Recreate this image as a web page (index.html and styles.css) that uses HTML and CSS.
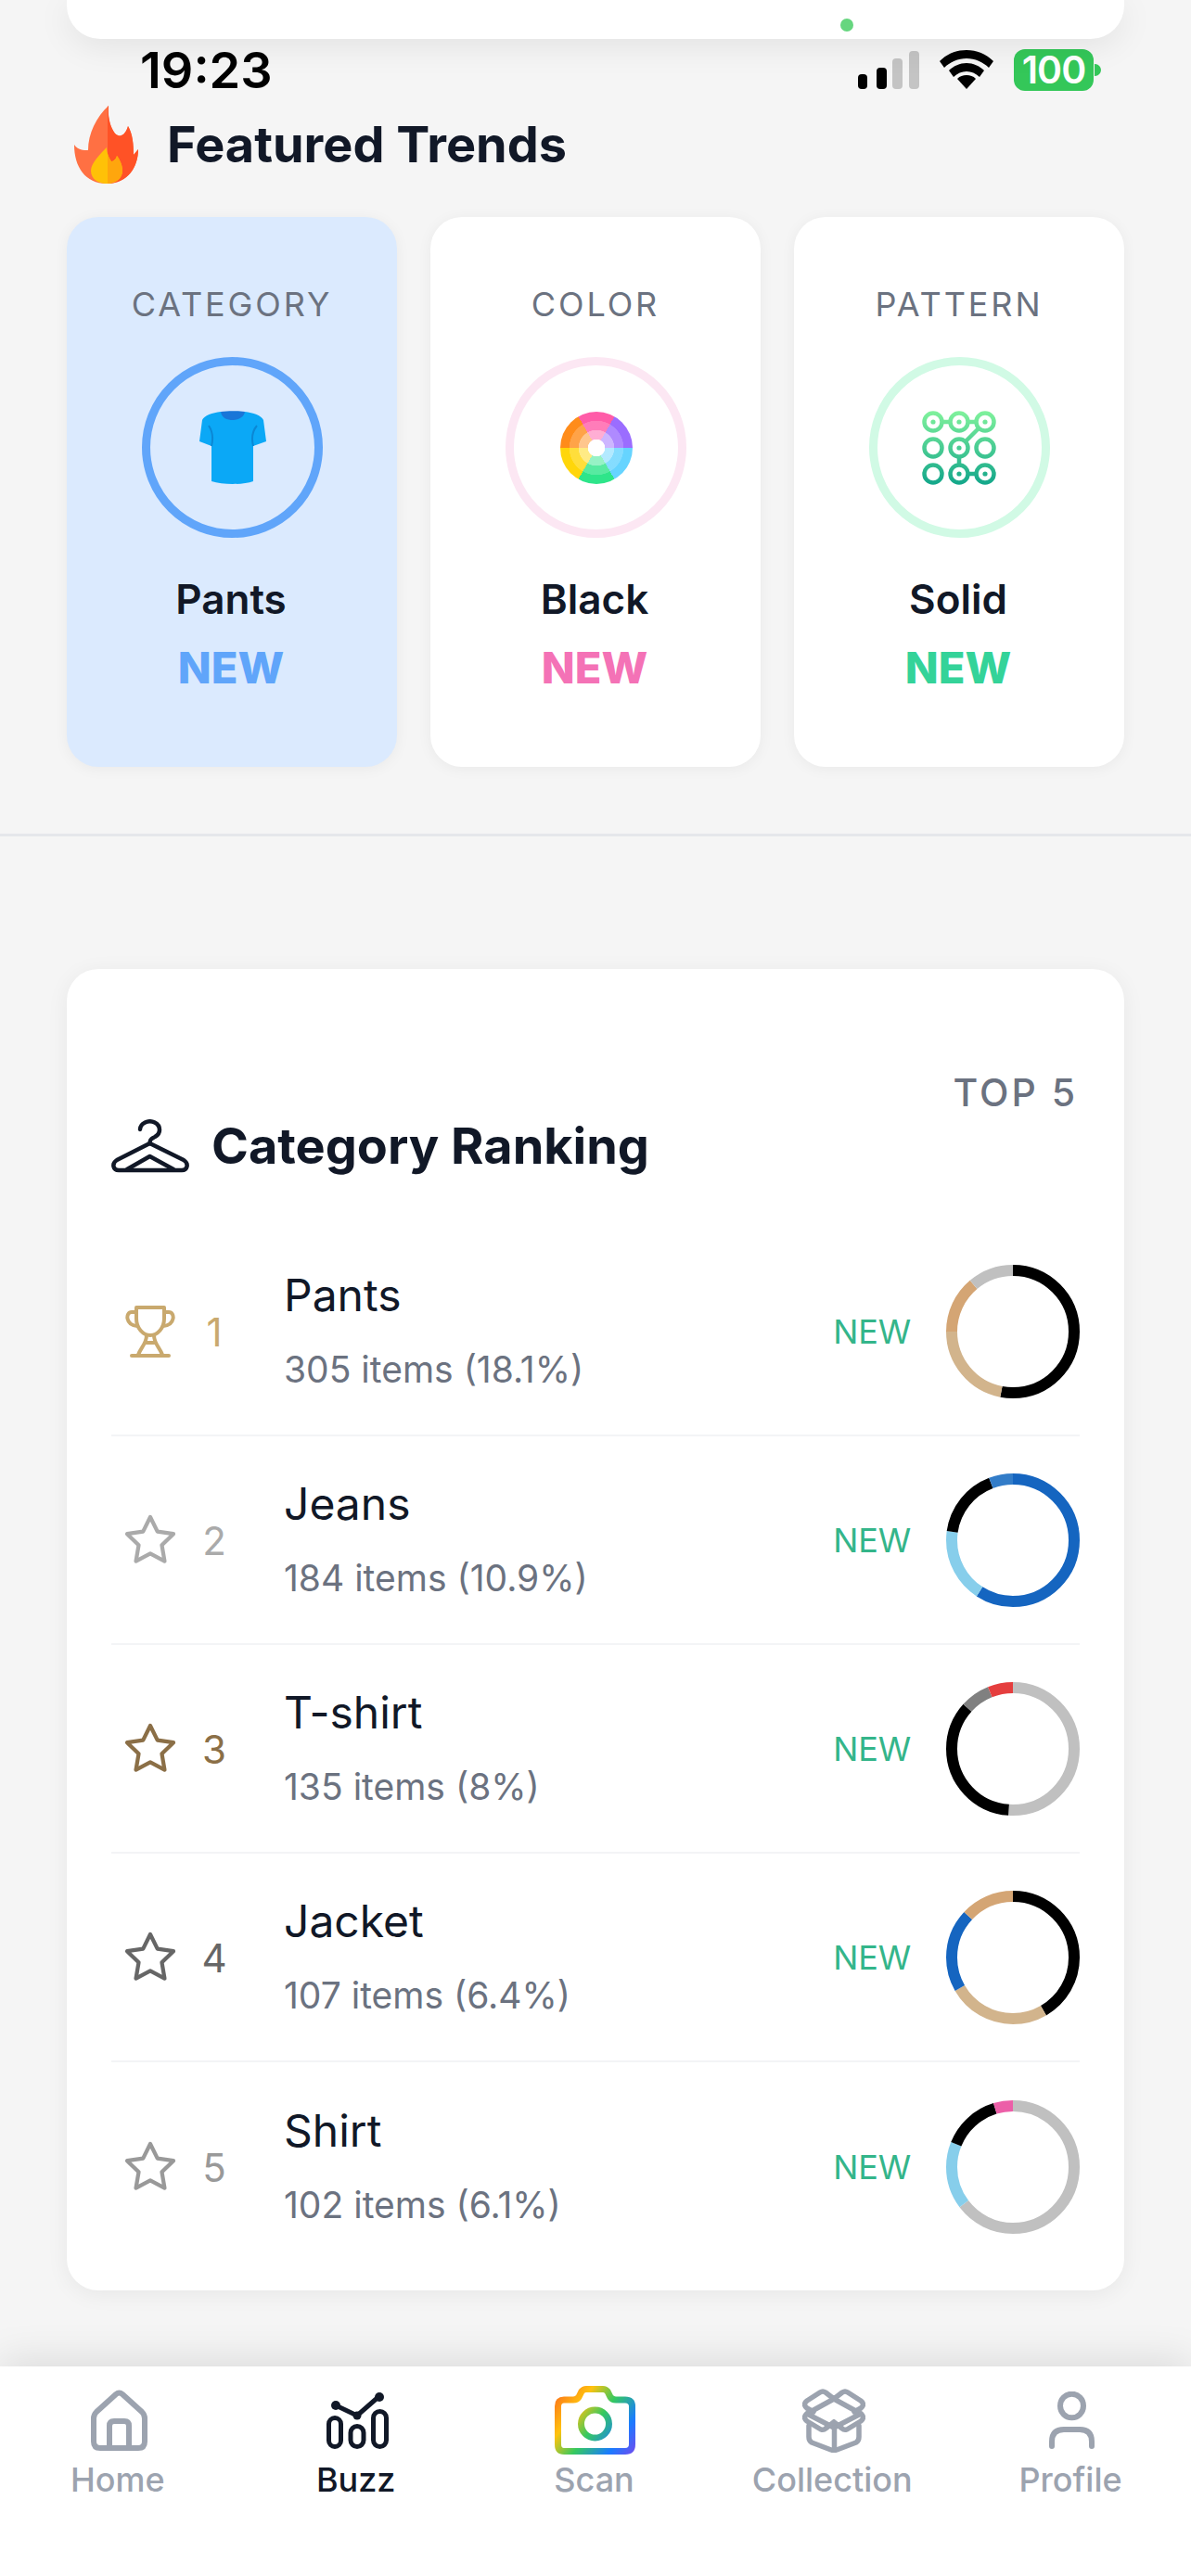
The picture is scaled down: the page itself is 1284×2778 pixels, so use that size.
FILE: index.html
```html
<!doctype html>
<html>
<head>
<meta charset="utf-8">
<title>Buzz</title>
<link rel="stylesheet" href="styles.css">
</head>
<body>
<div class="topCard"><span class="topDot"></span></div>

<div class="statusBar">
	<span class="time">19:23</span>
	<div class="statusIcons">
		<svg class="signal" width="66" height="41" viewBox="0 0 66 41">
			<rect x="0" y="25" width="10" height="16" rx="4" fill="#000"/>
			<rect x="20" y="18" width="11" height="23" rx="4" fill="#000"/>
			<rect x="37" y="8" width="11" height="33" rx="4" fill="#c4c4c4"/>
			<rect x="55" y="0" width="11" height="41" rx="4" fill="#c4c4c4"/>
		</svg>
		<svg class="wifi" width="58" height="42" viewBox="0 0 58 42">
			<path d="M29 0C18 0 8 4 0 12l5 7c6-6 15-10 24-10s18 4 24 10l5-7C50 4 40 0 29 0z" fill="#000"/>
			<path d="M29 14c-7 0-14 3-19 8l5 7c4-4 9-6 14-6s10 2 14 6l5-7c-5-5-12-8-19-8z" fill="#000"/>
			<path d="M29 27c-4 0-7 1-10 4l10 11 10-11c-3-3-6-4-10-4z" fill="#000"/>
		</svg>
		<div class="battery">100</div>
		<span class="batteryNub"></span>
	</div>
</div>

<div class="sectionHead">
	<svg width="70" height="84" viewBox="0 0 70 84">
		<defs>
			<clipPath id="flameRight"><rect x="36" y="0" width="34" height="84"/></clipPath>
		</defs>
		<path d="M37 0C24 12 15 30 15 48C10 48 4 48 0 42C0 66 12 84 35 84C58 84 69 66 69 47L64 53C64 42 63 30 58 22C56 30 50 36 44 30C38 22 36 10 37 0Z" fill="#ff7043"/>
		<path clip-path="url(#flameRight)" d="M37 0C24 12 15 30 15 48C10 48 4 48 0 42C0 66 12 84 35 84C58 84 69 66 69 47L64 53C64 42 63 30 58 22C56 30 50 36 44 30C38 22 36 10 37 0Z" fill="#ff5226"/>
		<path d="M35 45C28 52 18 62 18 70C18 79 26 84 35 84C44 84 52 79 52 70C52 64 49 58 46 54C45 58 42 60 40 60C37 56 35 50 35 45Z" fill="#ffc107"/>
		<path clip-path="url(#flameRight)" d="M35 45C28 52 18 62 18 70C18 79 26 84 35 84C44 84 52 79 52 70C52 64 49 58 46 54C45 58 42 60 40 60C37 56 35 50 35 45Z" fill="#ffa60d"/>
	</svg>
	<h2>Featured Trends</h2>
</div>

<div class="trendList">
	<div class="trendCard trendCardOn">
		<div class="trendLabel">CATEGORY</div>
		<div class="trendCircle circleBlue">
			<svg class="teeIcon" width="72" height="79" viewBox="0 0 72 79">
				<path d="M23 1C14 2 5 5 3 10L0 33L13 38V76C25 80 47 80 58 76V38L72 33L69 10C67 5 58 2 49 1C45 6 27 6 23 1Z" fill="#0ba8f6"/>
				<path d="M23 1C30 0 42 0 49 1C48 8 40 10 36 10C30 10 24 8 23 1Z" fill="#1976d8"/>
				<path d="M13 38C15 30 14 22 10 16M58 38C56 30 57 22 62 16" fill="none" stroke="#0b87d4" stroke-width="2"/>
			</svg>
		</div>
		<div class="trendName">Pants</div>
		<div class="trendNew newBlue">NEW</div>
	</div>
	<div class="trendCard">
		<div class="trendLabel">COLOR</div>
		<div class="trendCircle circlePink">
			<div class="colorWheel"></div>
		</div>
		<div class="trendName">Black</div>
		<div class="trendNew newPink">NEW</div>
	</div>
	<div class="trendCard">
		<div class="trendLabel">PATTERN</div>
		<div class="trendCircle circleGreen">
			<svg width="80" height="80" viewBox="0 0 80 80">
				<defs>
					<linearGradient id="patternGrad" gradientUnits="userSpaceOnUse" x1="0" y1="0" x2="0" y2="80">
						<stop offset="0" stop-color="#80f29c"/>
						<stop offset="1" stop-color="#12a68a"/>
					</linearGradient>
				</defs>
				<g fill="none" stroke="url(#patternGrad)" stroke-width="4.5">
					<circle cx="12" cy="12" r="9.5"/><circle cx="40" cy="12" r="9.5"/><circle cx="68" cy="12" r="9.5"/>
					<circle cx="12" cy="40" r="9.5"/><circle cx="40" cy="40" r="9.5"/><circle cx="68" cy="40" r="9.5"/>
					<circle cx="12" cy="68" r="9.5"/><circle cx="40" cy="68" r="9.5"/><circle cx="68" cy="68" r="9.5"/>
					<path d="M21 12H31M49 12H59M61 19L47 33M40 49V59M49 68H59"/>
				</g>
				<g fill="url(#patternGrad)">
					<circle cx="12" cy="12" r="2.6"/><circle cx="40" cy="12" r="2.6"/><circle cx="68" cy="12" r="2.6"/>
					<circle cx="40" cy="40" r="2.6"/><circle cx="40" cy="68" r="2.6"/><circle cx="68" cy="68" r="2.6"/>
				</g>
			</svg>
		</div>
		<div class="trendName">Solid</div>
		<div class="trendNew newGreen">NEW</div>
	</div>
</div>

<div class="divider"></div>

<div class="rankCard">
	<div class="rankTop">TOP 5</div>
	<div class="rankHead">
		<svg width="84" height="58" viewBox="0 0 84 58" fill="none" stroke="#111827" stroke-width="4.5" stroke-linejoin="round" stroke-linecap="round">
			<path d="M31 11A10.5 9 0 1 1 47 19C44 21 41.5 21 41.5 26"/>
			<path d="M41.5 26L78 44C84 48 82 55 76 55H8C2 55 0 48 6 44Z"/>
			<path d="M17 54L41.5 40L67 54"/>
		</svg>
		<h2>Category Ranking</h2>
	</div>

	<div class="rankRow">
		<div class="rankIcon">
			<svg width="54" height="56" viewBox="0 0 54 56" fill="none" stroke="#c9a96e" stroke-width="4" stroke-linecap="round" stroke-linejoin="round">
				<path d="M12 2H42V14C42 24 35 32 27 32C19 32 12 24 12 14Z"/>
				<path d="M12 7H7C0 7 0 21 13 22M42 7H47C54 7 54 21 41 22"/>
				<path d="M23 32C23 41 17 45 14 53M31 32C31 41 37 45 40 53M21 40H33"/>
				<path d="M7 54H47"/>
			</svg>
		</div>
		<div class="rankNum num1">1</div>
		<div class="rankInfo">
			<div class="rankName">Pants</div>
			<div class="rankSub">305 items (18.1%)</div>
		</div>
		<div class="rankNew">NEW</div>
		<svg class="donut" width="144" height="144" viewBox="0 0 144 144">
			<circle cx="72" cy="72" r="66" pathLength="360" stroke="#000" stroke-dasharray="191 169"/>
			<circle cx="72" cy="72" r="66" pathLength="360" stroke="#d2b48c" stroke-dasharray="79 281" stroke-dashoffset="-191"/>
			<circle cx="72" cy="72" r="66" pathLength="360" stroke="#d4a574" stroke-dasharray="50 310" stroke-dashoffset="-270"/>
			<circle cx="72" cy="72" r="66" pathLength="360" stroke="#c0c0c0" stroke-dasharray="40 320" stroke-dashoffset="-320"/>
		</svg>
	</div>

	<div class="rankRow">
		<div class="rankIcon">
			<svg class="star star2" width="60" height="60" viewBox="0 0 24 24"><path d="M12 2l3.09 6.26L22 9.27l-5 4.87 1.18 6.88L12 17.77l-6.18 3.25L7 14.14 2 9.27l6.91-1.01L12 2z"/></svg>
		</div>
		<div class="rankNum num2">2</div>
		<div class="rankInfo">
			<div class="rankName">Jeans</div>
			<div class="rankSub">184 items (10.9%)</div>
		</div>
		<div class="rankNew">NEW</div>
		<svg class="donut" width="144" height="144" viewBox="0 0 144 144">
			<circle cx="72" cy="72" r="66" pathLength="360" stroke="#1565c0" stroke-dasharray="213 147"/>
			<circle cx="72" cy="72" r="66" pathLength="360" stroke="#87ceeb" stroke-dasharray="65 295" stroke-dashoffset="-213"/>
			<circle cx="72" cy="72" r="66" pathLength="360" stroke="#000" stroke-dasharray="61 299" stroke-dashoffset="-278"/>
			<circle cx="72" cy="72" r="66" pathLength="360" stroke="#327cc8" stroke-dasharray="21 339" stroke-dashoffset="-339"/>
		</svg>
	</div>

	<div class="rankRow">
		<div class="rankIcon">
			<svg class="star star3" width="60" height="60" viewBox="0 0 24 24"><path d="M12 2l3.09 6.26L22 9.27l-5 4.87 1.18 6.88L12 17.77l-6.18 3.25L7 14.14 2 9.27l6.91-1.01L12 2z"/></svg>
		</div>
		<div class="rankNum num3">3</div>
		<div class="rankInfo">
			<div class="rankName">T-shirt</div>
			<div class="rankSub">135 items (8%)</div>
		</div>
		<div class="rankNew">NEW</div>
		<svg class="donut" width="144" height="144" viewBox="0 0 144 144">
			<circle cx="72" cy="72" r="66" pathLength="360" stroke="#c0c0c0" stroke-dasharray="184 176"/>
			<circle cx="72" cy="72" r="66" pathLength="360" stroke="#000" stroke-dasharray="128 232" stroke-dashoffset="-184"/>
			<circle cx="72" cy="72" r="66" pathLength="360" stroke="#808080" stroke-dasharray="26 334" stroke-dashoffset="-312"/>
			<circle cx="72" cy="72" r="66" pathLength="360" stroke="#e53e3e" stroke-dasharray="22 338" stroke-dashoffset="-338"/>
		</svg>
	</div>

	<div class="rankRow">
		<div class="rankIcon">
			<svg class="star star4" width="60" height="60" viewBox="0 0 24 24"><path d="M12 2l3.09 6.26L22 9.27l-5 4.87 1.18 6.88L12 17.77l-6.18 3.25L7 14.14 2 9.27l6.91-1.01L12 2z"/></svg>
		</div>
		<div class="rankNum num4">4</div>
		<div class="rankInfo">
			<div class="rankName">Jacket</div>
			<div class="rankSub">107 items (6.4%)</div>
		</div>
		<div class="rankNew">NEW</div>
		<svg class="donut" width="144" height="144" viewBox="0 0 144 144">
			<circle cx="72" cy="72" r="66" pathLength="360" stroke="#000" stroke-dasharray="150 210"/>
			<circle cx="72" cy="72" r="66" pathLength="360" stroke="#d2b48c" stroke-dasharray="90 270" stroke-dashoffset="-150"/>
			<circle cx="72" cy="72" r="66" pathLength="360" stroke="#1565c0" stroke-dasharray="73 287" stroke-dashoffset="-240"/>
			<circle cx="72" cy="72" r="66" pathLength="360" stroke="#d4a574" stroke-dasharray="47 313" stroke-dashoffset="-313"/>
		</svg>
	</div>

	<div class="rankRow rankRowLast">
		<div class="rankIcon">
			<svg class="star star5" width="60" height="60" viewBox="0 0 24 24"><path d="M12 2l3.09 6.26L22 9.27l-5 4.87 1.18 6.88L12 17.77l-6.18 3.25L7 14.14 2 9.27l6.91-1.01L12 2z"/></svg>
		</div>
		<div class="rankNum num5">5</div>
		<div class="rankInfo">
			<div class="rankName">Shirt</div>
			<div class="rankSub">102 items (6.1%)</div>
		</div>
		<div class="rankNew">NEW</div>
		<svg class="donut" width="144" height="144" viewBox="0 0 144 144">
			<circle cx="72" cy="72" r="66" pathLength="360" stroke="#c0c0c0" stroke-dasharray="233 127"/>
			<circle cx="72" cy="72" r="66" pathLength="360" stroke="#87ceeb" stroke-dasharray="59 301" stroke-dashoffset="-233"/>
			<circle cx="72" cy="72" r="66" pathLength="360" stroke="#000" stroke-dasharray="51 309" stroke-dashoffset="-292"/>
			<circle cx="72" cy="72" r="66" pathLength="360" stroke="#ec5fa8" stroke-dasharray="17 343" stroke-dashoffset="-343"/>
		</svg>
	</div>
</div>

<div class="tabBar">
	<div class="tabItem">
		<div class="tabIcon">
			<svg width="61" height="66" viewBox="0 0 61 66" fill="none" stroke="#9ca3af" stroke-width="6" stroke-linejoin="round" stroke-linecap="round">
				<path d="M27 5Q30.500 2 34 5L55 24Q58 27 58 31V56Q58 63 51 63H10Q3 63 3 56V31Q3 27 6 24Z"/>
				<path d="M20 63V39Q20 34 25 34H36Q41 34 41 39V63"/>
			</svg>
		</div>
		<span>Home</span>
	</div>
	<div class="tabItem tabItemOn">
		<div class="tabIcon">
			<svg width="67" height="61" viewBox="0 0 67 61">
				<g fill="none" stroke="#111827" stroke-width="5">
					<rect x="2.500" y="27.500" width="13" height="31" rx="6.500"/>
					<rect x="26" y="36.500" width="14" height="22" rx="7"/>
					<rect x="50.500" y="20.500" width="14" height="38" rx="7"/>
					<path d="M10 14L33 25L57 4"/>
				</g>
				<g fill="#111827">
					<circle cx="10" cy="14" r="5"/><circle cx="33" cy="25" r="4.500"/><circle cx="57" cy="5" r="5"/>
				</g>
			</svg>
		</div>
		<span>Buzz</span>
	</div>
	<div class="tabItem">
		<div class="tabIcon">
			<svg width="87" height="74" viewBox="0 0 87 74" fill="none" stroke="url(#scanGrad)" stroke-width="7">
				<defs>
					<linearGradient id="scanGrad" gradientUnits="userSpaceOnUse" x1="0" y1="5" x2="87" y2="70">
						<stop offset="0" stop-color="#fb6a1c"/>
						<stop offset=".28" stop-color="#ffc20e"/>
						<stop offset=".52" stop-color="#35c95f"/>
						<stop offset=".8" stop-color="#1a7bff"/>
						<stop offset="1" stop-color="#6a4ff0"/>
					</linearGradient>
				</defs>
				<path d="M10 15H20Q24 15 26 12L29 6Q31 3.500 34 3.500H52Q55 3.500 57 6L60 12Q62 15 66 15H76Q83.500 15 83.500 22V63Q83.500 70.500 76 70.500H10Q3.500 70.500 3.500 63V22Q3.500 15 10 15Z"/>
				<circle cx="43.500" cy="41" r="15"/>
			</svg>
		</div>
		<span>Scan</span>
	</div>
	<div class="tabItem">
		<div class="tabIcon">
			<svg width="68" height="69" viewBox="0 0 68 69" fill="none" stroke="#9ca3af" stroke-width="5.500" stroke-linejoin="round" stroke-linecap="round">
				<path d="M34 11L63 27L34 42L5 27Z"/>
				<path d="M34 11L25 4Q22 2 19 4L5 13Q0 17 5 21L12 25M34 11L43 4Q46 2 49 4L63 13Q68 17 63 21L56 25"/>
				<path d="M5 27Q0 31 5 35L20 44Q23 45 25 43L34 36M63 27Q68 31 63 35L48 44Q45 45 43 43L34 36"/>
				<path d="M7 40V52Q7 56 10 58L31 66Q34 67 37 66L58 58Q61 56 61 52V40M34.500 42V66"/>
			</svg>
		</div>
		<span>Collection</span>
	</div>
	<div class="tabItem">
		<div class="tabIcon">
			<svg width="49" height="62" viewBox="0 0 49 62" fill="none" stroke="#9ca3af" stroke-width="6" stroke-linecap="round">
				<ellipse cx="24.500" cy="15.500" rx="12.500" ry="12.800"/>
				<path d="M3 59V54Q3 41 16 41H33Q46 41 46 54V59"/>
			</svg>
		</div>
		<span>Profile</span>
	</div>
</div>
</body>
</html>
```

FILE: styles.css
```css
*{ margin:0; padding:0; box-sizing:border-box}
html,body{ background:#f5f5f5}
body{ width:1284px; height:2778px; overflow:hidden; font-family:Inter,"Liberation Sans",sans-serif; position:relative}

.topCard{ position:relative; margin:0 72px; height:42px; background:#fff; border-radius:0 0 36px 36px; box-shadow:0 8px 36px rgba(0,0,0,.08)}
.topDot{ position:absolute; left:834px; top:20px; width:14px; height:14px; border-radius:50%; background:#66d67f}

.statusBar{ display:flex; justify-content:space-between; align-items:center; height:60px; padding:6px 97px 0 151px}
.time{ font-size:54px; line-height:56px; font-weight:600; color:#000; padding-top:2px}
.statusIcons{ display:flex; align-items:center}
.wifi{ margin-left:22px}
.battery{ margin-left:22px; width:86px; height:45px; border-radius:12px; background:#34c759; color:#fff; font-size:41px; line-height:45px; font-weight:600; text-align:center; letter-spacing:-1px}
.batteryNub{ width:7px; height:13px; border-radius:0 7px 7px 0; background:#34c759; margin-left:1px}

.sectionHead{ display:flex; align-items:center; gap:30px; padding:6px 0 0 80px; height:102px}
.sectionHead h2{ font-size:54px; line-height:64px; font-weight:700; color:#111827}

.trendList{ display:flex; gap:36px; margin:30px 72px 0}
.trendCard{ width:356px; height:593px; border-radius:34px; background:#fff; box-shadow:0 2px 16px rgba(0,0,0,.05); display:flex; flex-direction:column; align-items:center; padding-top:73px}
.trendCardOn{ background:#dbeafe}
.trendLabel{ font-size:36px; line-height:42px; color:#6b7280; letter-spacing:2.9px}
.trendCircle{ width:195px; height:195px; border-radius:50%; border:9px solid; margin-top:36px; display:flex; align-items:center; justify-content:center}
.circleBlue{ border-color:#60a5fa}
.circlePink{ border-color:#fce7f3}
.circleGreen{ border-color:#d1fae5}
.teeIcon{ margin-left:2px}
.colorWheel{ width:78px; height:78px; margin-left:1px; border-radius:50%; background:radial-gradient(circle,#fff 9px,rgba(255,255,255,.5) 9.5px,rgba(255,255,255,.5) 19px,rgba(255,255,255,.2) 19.5px,rgba(255,255,255,.2) 29px,transparent 29.5px),conic-gradient(from -30deg,#ff5ca8 0 60deg,#9b6dff 0 120deg,#66d4ff 0 180deg,#2ee58a 0 240deg,#ffd60a 0 300deg,#ff8c1a 0 360deg)}
.trendName{ font-size:44px; line-height:50px; font-weight:600; color:#111827; margin-top:41px; margin-right:2px}
.trendNew{ font-size:47px; line-height:56px; font-weight:800; margin-top:21px; margin-right:2px}
.newBlue{ color:#60a5fa}
.newPink{ color:#f472b6}
.newGreen{ color:#34d399}

.divider{ height:3px; background:#e5e7eb; margin-top:72px}

.rankCard{ margin:143px 72px 0; height:1425px; background:#fff; border-radius:34px; box-shadow:0 4px 24px rgba(0,0,0,.06); padding:108px 48px 0}
.rankTop{ text-align:right; font-size:41px; line-height:50px; font-weight:500; color:#6b7280; letter-spacing:3px; padding-right:2px}
.rankHead{ display:flex; align-items:center; gap:24px; height:64px; margin:1px 0 56px}
.rankHead h2{ font-size:54px; line-height:64px; font-weight:700; color:#111827}

.rankRow{ display:flex; align-items:center; height:225px; border-bottom:2px solid #f3f4f6; padding-left:12px}
.rankRowLast{ border-bottom:0}
.rankIcon{ width:60px; display:flex; justify-content:center}
.rankNum{ width:42px; margin-left:18px; margin-right:54px; text-align:center; font-size:42px; line-height:50px; padding-top:2px}
.num1{ color:#c9a96e}
.num2{ color:#aaa}
.num3{ color:#8b6f47}
.num4{ color:#666}
.num5{ color:#999}
.rankInfo{ flex:1; display:flex; flex-direction:column; gap:26px; padding-top:2px}
.rankName{ font-size:48px; line-height:54px; color:#111827}
.rankSub{ font-size:39px; line-height:54px; color:#6b7280}
.rankNew{ font-size:36px; line-height:44px; color:#34b58a; margin-right:38px; letter-spacing:-.2px}
.donut{ display:block; transform:rotate(-90deg)}
.donut circle{ fill:none; stroke-width:12}
.star path{ fill:none; stroke-width:1.7; stroke-linejoin:round}
.star2 path{ stroke:#aaa}
.star3 path{ stroke:#8b6f47}
.star4 path{ stroke:#666}
.star5 path{ stroke:#999}

.tabBar{ position:absolute; left:0; right:0; top:2552px; bottom:0; background:#fff; display:flex; box-shadow:0 -8px 40px rgba(0,0,0,.1)}
.tabItem{ flex:1; display:flex; flex-direction:column; align-items:center; padding-top:20px; font-size:36px; line-height:44px; font-weight:500; color:#9ca3af}
.tabItem span{ margin-right:3px}
.tabItemOn{ color:#111827}
.tabIcon{ height:76px; margin-bottom:4px; display:flex; align-items:center; justify-content:center}
```
